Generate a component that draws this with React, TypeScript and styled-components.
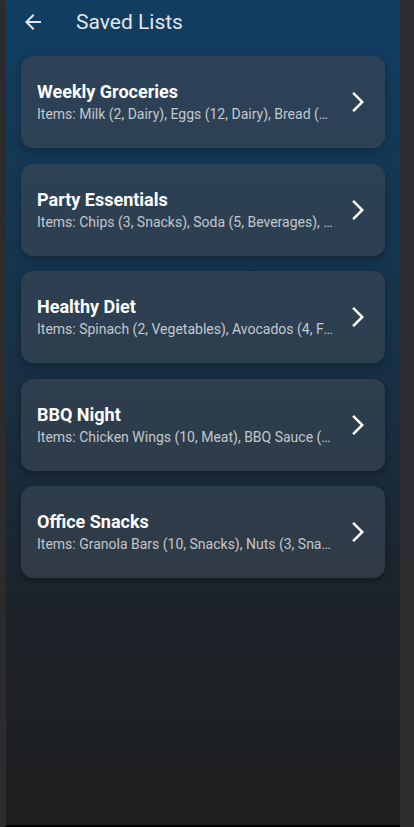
import React from "react";
import styled, { createGlobalStyle } from "styled-components";

const Global = createGlobalStyle`
  html, body { margin: 0; padding: 0; background: #2b2b2d; }
  body { font-family: Roboto, "Noto Sans", "Liberation Sans", sans-serif; }
  * { box-sizing: border-box; }
`;

const Frame = styled.div`
  display: flex;
  width: 414px;
  height: 827px;
  background: #2b2b2d;
`;

const SideStrip = styled.div<{ $w: number }>`
  width: ${(p) => p.$w}px;
  flex-shrink: 0;
  background: #2c2c2e;
`;

const Screen = styled.div`
  flex: 1;
  display: flex;
  flex-direction: column;
  min-width: 0;
`;

const Body = styled.div`
  flex: 1;
  display: flex;
  flex-direction: column;
  background: linear-gradient(180deg, #113e62 0%, #173249 40%, #1d2329 75%, #1e1e1f 100%);
`;

const BottomBar = styled.div`
  height: 2px;
  background: #000;
`;

const Header = styled.header`
  height: 43px;
  display: flex;
  align-items: center;
  padding-left: 15px;
  gap: 31px;
`;

const IconButton = styled.button`
  width: 24px;
  height: 24px;
  padding: 0;
  border: 0;
  background: transparent;
  color: #e6e8ee;
  display: flex;
  align-items: center;
  justify-content: center;
`;

const Title = styled.h1`
  margin: 0;
  font-size: 21px;
  font-weight: 400;
  color: #e3e5ea;
  letter-spacing: 0;
`;

const List = styled.div`
  display: flex;
  flex-direction: column;
  gap: 15.5px;
  padding: 13px 15px 0 15px;
`;

const Card = styled.div`
  display: flex;
  align-items: center;
  gap: 12px;
  padding: 24px 15px 24px 16px;
  border-radius: 12px;
  background: rgba(58, 70, 84, 0.66);
  box-shadow: 0 3px 8px rgba(0, 0, 0, 0.3);
`;

const TextCol = styled.div`
  flex: 1;
  min-width: 0;
  display: flex;
  flex-direction: column;
`;

const CardTitle = styled.div`
  font-size: 18px;
  line-height: 24px;
  font-weight: 700;
  color: #ffffff;
  white-space: nowrap;
  overflow: hidden;
  text-overflow: ellipsis;
`;

const CardSub = styled.div`
  font-size: 14px;
  line-height: 20px;
  color: rgba(255, 255, 255, 0.72);
  white-space: nowrap;
  overflow: hidden;
  text-overflow: ellipsis;
`;

const Chevron = styled.svg`
  width: 24px;
  height: 24px;
  flex-shrink: 0;
  fill: #ffffff;
`;

const lists = [
  {
    name: "Weekly Groceries",
    items: "Items: Milk (2, Dairy), Eggs (12, Dairy), Bread (1, Bakery), Apples (6, Fruits)",
  },
  {
    name: "Party Essentials",
    items: "Items: Chips (3, Snacks), Soda (5, Beverages), Cups (20, Supplies)",
  },
  {
    name: "Healthy Diet",
    items: "Items: Spinach (2, Vegetables), Avocados (4, Fruits), Quinoa (1, Grains)",
  },
  {
    name: "BBQ Night",
    items: "Items: Chicken Wings (10, Meat), BBQ Sauce (2, Condiments), Corn (6, Vegetables)",
  },
  {
    name: "Office Snacks",
    items: "Items: Granola Bars (10, Snacks), Nuts (3, Snacks), Coffee (1, Beverages)",
  },
];

export default function App() {
  return (
    <>
      <Global />
      <Frame>
        <SideStrip $w={6} />
        <Screen>
          <Body>
            <Header>
              <IconButton aria-label="Back">
                <svg width="24" height="24" viewBox="0 0 24 24" fill="currentColor">
                  <path d="M20 11H7.83l5.59-5.59L12 4l-8 8 8 8 1.41-1.41L7.83 13H20v-2z" />
                </svg>
              </IconButton>
              <Title>Saved Lists</Title>
            </Header>
            <List>
              {lists.map((l) => (
                <Card key={l.name}>
                  <TextCol>
                    <CardTitle>{l.name}</CardTitle>
                    <CardSub>{l.items}</CardSub>
                  </TextCol>
                  <Chevron viewBox="0 0 24 24">
                    <path d="M6.23 20.23 8 22l10-10L8 2 6.23 3.77 14.46 12z" />
                  </Chevron>
                </Card>
              ))}
            </List>
          </Body>
          <BottomBar />
        </Screen>
        <SideStrip $w={14} />
      </Frame>
    </>
  );
}
